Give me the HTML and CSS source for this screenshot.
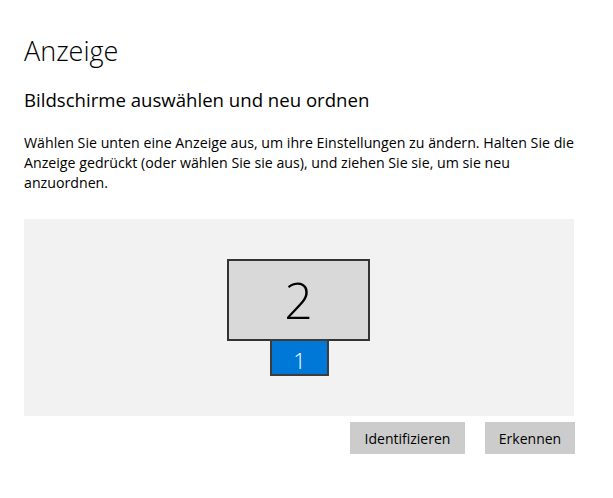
FILE: index.html
```html
<!DOCTYPE html>
<html lang="de">
<head>
<meta charset="utf-8">
<link rel="stylesheet" href="styles.css">
</head>
<body>
<main class="page">
  <h1 class="title">Anzeige</h1>
  <h2 class="subtitle">Bildschirme auswählen und neu ordnen</h2>
  <p class="desc">Wählen Sie unten eine Anzeige aus, um ihre Einstellungen zu ändern. Halten Sie die<br>Anzeige gedrückt (oder wählen Sie sie aus), und ziehen Sie sie, um sie neu<br>anzuordnen.</p>
  <div class="canvas">
    <div class="monitor monitor-2"><span>2</span></div>
    <div class="monitor monitor-1"><span>1</span></div>
  </div>
  <div class="actions">
    <button class="btn btn-identify">Identifizieren</button>
    <button class="btn btn-detect">Erkennen</button>
  </div>
</main>
</body>
</html>
```
FILE: styles.css
```css
html, body {
  margin: 0;
  padding: 0;
  background: #fff;
}
body {
  font-family: "Open Sans", "Noto Sans", "Liberation Sans", sans-serif;
  color: #000;
}
.page {
  padding: 0 39px 0 24px;
}
.title {
  margin: 0;
  padding-top: 33px;
  font-size: 27px;
  font-weight: 300;
  line-height: 36px;
}
.subtitle {
  margin: 0;
  padding-top: 18px;
  font-size: 18.6px;
  font-weight: 400;
  line-height: 26px;
}
.desc {
  margin: 0;
  padding-top: 20px;
  font-size: 14.2px;
  line-height: 20px;
}
.canvas {
  position: relative;
  margin-top: 26px;
  width: 550px;
  height: 197px;
  background: #f2f2f2;
}
.monitor {
  position: absolute;
  box-sizing: border-box;
  border: 2px solid #333;
  display: flex;
  align-items: center;
  justify-content: center;
  font-weight: 300;
}
.monitor-2 {
  left: 203px;
  top: 40px;
  width: 143px;
  height: 82px;
  background: #d9d9d9;
  font-size: 50px;
  color: #000;
}
.monitor-1 {
  left: 246px;
  top: 120px;
  width: 59px;
  height: 37px;
  background: #0078d7;
  border-color: #3c3c3c;
  font-size: 22px;
  color: #fff;
  padding-top: 4px;
}
.actions {
  display: flex;
  justify-content: flex-end;
  gap: 20px;
  margin-top: 6px;
  width: 551px;
}
.btn {
  height: 32px;
  border: none;
  background: #cccccc;
  font-family: inherit;
  font-size: 14px;
  color: #000;
  padding: 0;
}
.btn-identify { width: 115px; }
.btn-detect { width: 90px; }
```
